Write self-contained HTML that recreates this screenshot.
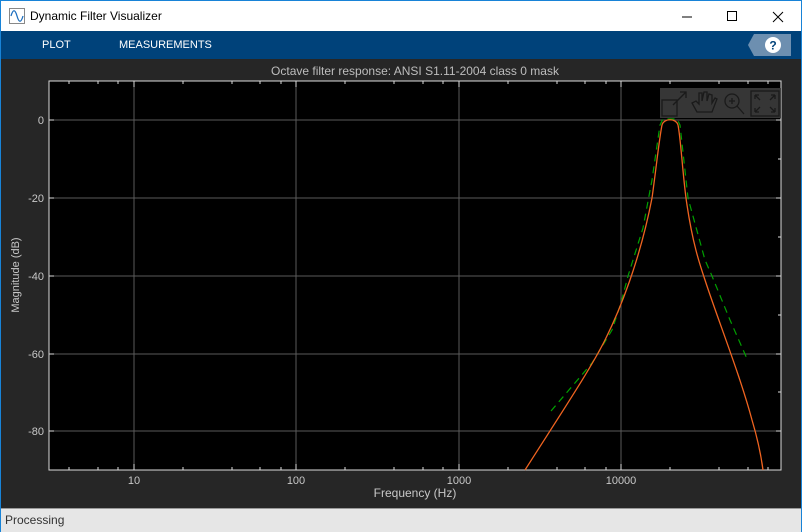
<!DOCTYPE html>
<html><head><style>
body{margin:0;width:802px;height:532px;overflow:hidden;font-family:"Liberation Sans",sans-serif;background:#262626;position:relative}
.tb{position:absolute;left:0;top:0;width:802px;height:31px;background:#fff;border-top:1px solid #1883d7;box-sizing:border-box}
.tb .t{position:absolute;left:30px;top:8px;font-size:12px;color:#000}
.menu{position:absolute;left:0;top:31px;width:802px;height:28px;background:#00427a}
.menu span{position:absolute;top:8px;font-size:11px;color:#fff}
.sb{position:absolute;left:0;top:508px;width:802px;height:24px;background:#e6e6e6;border-top:1px solid #999;box-sizing:border-box}
.sb span{position:absolute;left:5px;top:4px;font-size:12px;color:#333}
.edge{position:absolute;left:0;top:0;width:1px;height:532px;background:#1883d7}
.edge2{position:absolute;right:0;top:0;width:1px;height:532px;background:#1883d7}
</style></head><body>
<div class="tb">
<svg style="position:absolute;left:9px;top:7px" width="16" height="16"><rect x="0.5" y="0.5" width="15" height="15" fill="#fff" stroke="#888"/><path d="M2 8 C4 1,6 1,8 8 S12 15,14 8" fill="none" stroke="#1e6fbf" stroke-width="1.3"/></svg>
<span class="t">Dynamic Filter Visualizer</span>
<svg style="position:absolute;left:680px;top:9px" width="110" height="14"><line x1="2" y1="7" x2="12" y2="7" stroke="#000"/><rect x="47.5" y="1.5" width="9" height="9" fill="none" stroke="#000"/><path d="M93 2 L103 12 M103 2 L93 12" stroke="#000"/></svg>
</div>
<div class="menu"><span style="left:42px">PLOT</span><span style="left:119px">MEASUREMENTS</span>
<svg style="position:absolute;left:748px;top:3px" width="44" height="22"><path d="M6 0 H43 V22 H6 L0 11 Z" fill="#6d8fb0"/><circle cx="25" cy="11" r="8" fill="#fff"/><text x="25" y="15.5" font-size="12" font-weight="bold" text-anchor="middle" fill="#00427a" font-family="Liberation Sans">?</text></svg>
</div>
<svg style="position:absolute;left:0;top:59px" width="802" height="449" font-family="Liberation Sans" font-size="11" fill="#c8c8c8">
<g transform="translate(0,-59)">
<text x="415" y="75" text-anchor="middle" font-size="12" fill="#bdbdbd">Octave filter response: ANSI S1.11-2004 class 0 mask</text>
<rect x="49" y="81" width="732" height="389" fill="#000" stroke="#dcdcdc"/>
<g stroke="#5a5a5a" stroke-width="1">
<line x1="134" y1="81" x2="134" y2="470"/><line x1="296" y1="81" x2="296" y2="470"/><line x1="459" y1="81" x2="459" y2="470"/><line x1="621" y1="81" x2="621" y2="470"/>
<line x1="49" y1="120" x2="781" y2="120"/><line x1="49" y1="198" x2="781" y2="198"/><line x1="49" y1="276" x2="781" y2="276"/><line x1="49" y1="354" x2="781" y2="354"/><line x1="49" y1="431" x2="781" y2="431"/>
</g>
<g stroke="#dcdcdc">
<path d="M69 470v-3M98 470v-3M118 470v-3M183 470v-3M232 470v-3M260 470v-3M281 470v-3M345 470v-3M394 470v-3M423 470v-3M443 470v-3M508 470v-3M557 470v-3M585 470v-3M606 470v-3M670 470v-3M719 470v-3M748 470v-3M768 470v-3"/>
<path d="M69 81v3M98 81v3M118 81v3M183 81v3M232 81v3M260 81v3M281 81v3M345 81v3M394 81v3M423 81v3M443 81v3M508 81v3M557 81v3M585 81v3M606 81v3M670 81v3M719 81v3M748 81v3M768 81v3"/>
<path d="M134 470v-6M296 470v-6M459 470v-6M621 470v-6M134 81v6M296 81v6M459 81v6M621 81v6"/>
<path d="M49 120h5M49 198h5M49 276h5M49 354h5M49 431h5M781 120h-5M781 159h-3M781 198h-5M781 237h-3M781 276h-5M781 315h-3M781 354h-5M781 392h-3M781 431h-5"/>
</g>
<g text-anchor="end"><text x="44" y="124">0</text><text x="44" y="202">-20</text><text x="44" y="280">-40</text><text x="44" y="358">-60</text><text x="44" y="435">-80</text></g>
<g text-anchor="middle"><text x="134" y="484">10</text><text x="296" y="484">100</text><text x="459" y="484">1000</text><text x="621" y="484">10000</text>
<text x="415" y="497" font-size="12">Frequency (Hz)</text></g>
<text transform="translate(19,275) rotate(-90)" text-anchor="middle" font-size="11">Magnitude (dB)</text>
<path d="M551 411 L592 363 L612 330 L621 303 L628 276 L643 228 L652 180 L660 125 L663 119 L677 119 L680 125 L688 198 L705 260 L712 276 L730 320 L748 361" fill="none" stroke="#00a000" stroke-width="1.2" stroke-dasharray="7,5"/>
<path d="M525 470 C560 415,590 370,605 340 C620 310,640 260,652 198 C656 170,659 140,662 125 C664 118,676 118,678 125 C681 140,683 180,687 205 C693 245,700 265,705 280 C718 320,740 375,752 420 C758 440,761 455,763 470" fill="none" stroke="#f06420" stroke-width="1.3"/>
<rect x="660" y="88" width="121" height="30" fill="#3c3c3c" opacity="0.9"/>
<g fill="none" stroke="#1a1a1a" stroke-width="1.3">
<rect x="662" y="100" width="15" height="16"/><path d="M673 105 L686 92 M680 92 H686 V98"/>
<path d="M697 112 L692 103 L696 101 L699 104 L699 93 L702 93 L702 101 L704 92 L707 92 L707 101 L709 94 L712 95 L712 103 L715 98 L717 99 L712 112 Z"/>
<circle cx="732" cy="101" r="7"/><path d="M737 106 L744 114 M729 101 H735 M732 98 V104"/>
<rect x="751" y="91" width="28" height="25"/><path d="M755 95 L760 100 M755 95 V99 M755 95 H759 M775 95 L770 100 M775 95 V99 M775 95 H771 M755 112 L760 107 M755 112 V108 M755 112 H759 M775 112 L770 107 M775 112 V108 M775 112 H771"/>
</g>
</g></svg>
<div class="sb"><span>Processing</span></div>
<div class="edge"></div><div class="edge2"></div>
</body></html>
